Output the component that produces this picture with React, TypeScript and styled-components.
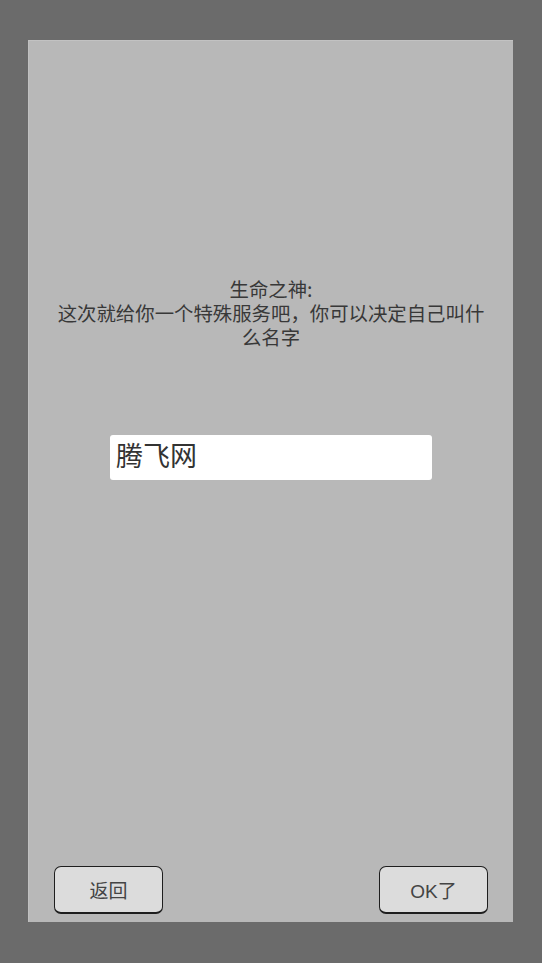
import styled, { createGlobalStyle } from 'styled-components';

const GlobalStyle = createGlobalStyle`
  html, body {
    margin: 0;
    padding: 0;
    background: #6b6b6b;
  }
  body {
    font-family: "Liberation Sans", "Noto Sans CJK SC", sans-serif;
  }
`;

export default function App() {
  return (
    <Screen>
      <GlobalStyle />
      <Panel>
        <Message>
          <Speaker>生命之神:</Speaker>
          <Line>这次就给你一个特殊服务吧，你可以决定自己叫什么名字</Line>
        </Message>
        <NameInput defaultValue="腾飞网" />
        <Spacer />
        <ButtonRow>
          <ActionButton>返回</ActionButton>
          <ActionButton>OK了</ActionButton>
        </ButtonRow>
      </Panel>
    </Screen>
  );
}

const Screen = styled.div`
  box-sizing: border-box;
  height: 963px;
  padding: 40px 29px 41px 28px;
  display: flex;
`;

const Panel = styled.div`
  box-sizing: border-box;
  flex: 1;
  min-width: 0;
  display: flex;
  flex-direction: column;
  align-items: center;
  background: #b8b8b8;
  border-top: 1px solid #c2c2c2;
  border-left: 1px solid #c0c0c0;
  padding: 236px 25px 8px;
`;

const Message = styled.div`
  width: 436px;
  flex-shrink: 0;
  text-align: center;
  font-family: "Noto Sans CJK SC", sans-serif;
  font-size: 19.4px;
  line-height: 24px;
  color: #383838;
`;

const Speaker = styled.div``;

const Line = styled.div``;

const NameInput = styled.input`
  box-sizing: border-box;
  flex-shrink: 0;
  margin-top: 86px;
  width: 322px;
  height: 45px;
  border: none;
  border-radius: 3px;
  background: #ffffff;
  padding: 0 6px 6px;
  font-family: "Noto Sans CJK SC", sans-serif;
  font-size: 27px;
  color: #333333;
  outline: none;
`;

const Spacer = styled.div`
  flex: 1;
`;

const ButtonRow = styled.div`
  align-self: stretch;
  display: flex;
  justify-content: space-between;
`;

const ActionButton = styled.button`
  box-sizing: border-box;
  width: 109px;
  height: 48px;
  background: #dcdcdc;
  border: 1px solid #1e1e1e;
  border-bottom-width: 2px;
  border-radius: 7px;
  font-family: "Liberation Sans", "Noto Sans CJK SC", sans-serif;
  font-size: 19px;
  color: #444444;
  padding: 0;
`;
